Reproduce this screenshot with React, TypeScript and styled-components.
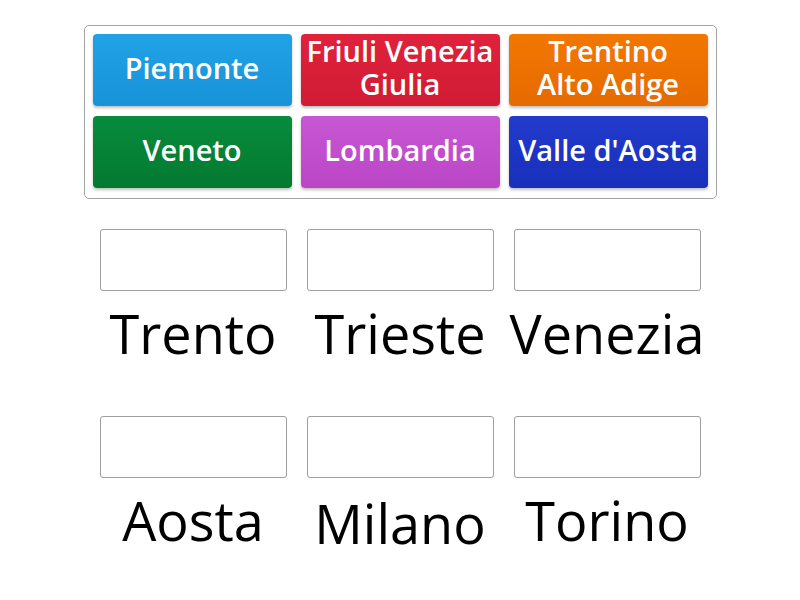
import React from "react";
import styled, { createGlobalStyle } from "styled-components";

const Global = createGlobalStyle`
  html, body { margin: 0; padding: 0; background: #fff; }
  body { font-family: "Open Sans", "DejaVu Sans", sans-serif; }
`;

const Page = styled.div`
  display: flex;
  flex-direction: column;
  align-items: center;
  padding-top: 25px;
`;

const Board = styled.div`
  box-sizing: border-box;
  width: 633px;
  border: 1px solid #a3a3a3;
  border-radius: 5px;
  padding: 8px 8px 10px 8px;
  display: grid;
  grid-template-columns: repeat(3, 1fr);
  column-gap: 9px;
  row-gap: 10px;
`;

const Tile = styled.div<{ $top: string; $bottom: string }>`
  box-sizing: border-box;
  height: 72px;
  padding-bottom: 6px;
  border-radius: 4px;
  background: linear-gradient(${(p) => p.$top}, ${(p) => p.$bottom});
  box-shadow: 0 2px 3px rgba(0, 0, 0, 0.25);
  color: #fff;
  font-weight: 600;
  font-size: 29px;
  line-height: 33px;
  display: flex;
  align-items: center;
  justify-content: center;
  text-align: center;
  white-space: nowrap;
`;

const Targets = styled.div`
  margin-top: 30px;
  display: grid;
  grid-template-columns: repeat(3, 187px);
  column-gap: 20px;
`;

const Cell = styled.div`
  display: flex;
  flex-direction: column;
  align-items: center;
  height: 187px;
`;

const Slot = styled.div`
  box-sizing: border-box;
  width: 187px;
  height: 62px;
  border: 1px solid #9e9e9e;
  border-radius: 3px;
  background: #fff;
`;

const Label = styled.div<{ $shift?: number }>`
  margin-top: ${(p) => 5 + (p.$shift ?? 0)}px;
  font-size: 54px;
  line-height: normal;
  color: #000;
  white-space: nowrap;
`;

const tiles = [
  { t: "Piemonte", a: "#21a2e6", b: "#1893d8" },
  { t: "Friuli Venezia\nGiulia", a: "#e0223c", b: "#d01b34" },
  { t: "Trentino\nAlto Adige", a: "#f27700", b: "#e66b00" },
  { t: "Veneto", a: "#088b3c", b: "#037a31" },
  { t: "Lombardia", a: "#c857d3", b: "#ba46c6" },
  { t: "Valle d'Aosta", a: "#223bcb", b: "#192fbc" },
];

const cities: { name: string; shift?: number }[] = [
  { name: "Trento" },
  { name: "Trieste" },
  { name: "Venezia" },
  { name: "Aosta" },
  { name: "Milano", shift: 3 },
  { name: "Torino" },
];

export default function App() {
  return (
    <>
      <Global />
      <Page>
        <Board>
          {tiles.map((x) => (
            <Tile key={x.t} $top={x.a} $bottom={x.b}>
              <span>
                {x.t.split("\n").map((l, i) => (
                  <React.Fragment key={i}>
                    {i > 0 && <br />}
                    {l}
                  </React.Fragment>
                ))}
              </span>
            </Tile>
          ))}
        </Board>
        <Targets>
          {cities.map((c) => (
            <Cell key={c.name}>
              <Slot />
              <Label $shift={c.shift}>{c.name}</Label>
            </Cell>
          ))}
        </Targets>
      </Page>
    </>
  );
}
